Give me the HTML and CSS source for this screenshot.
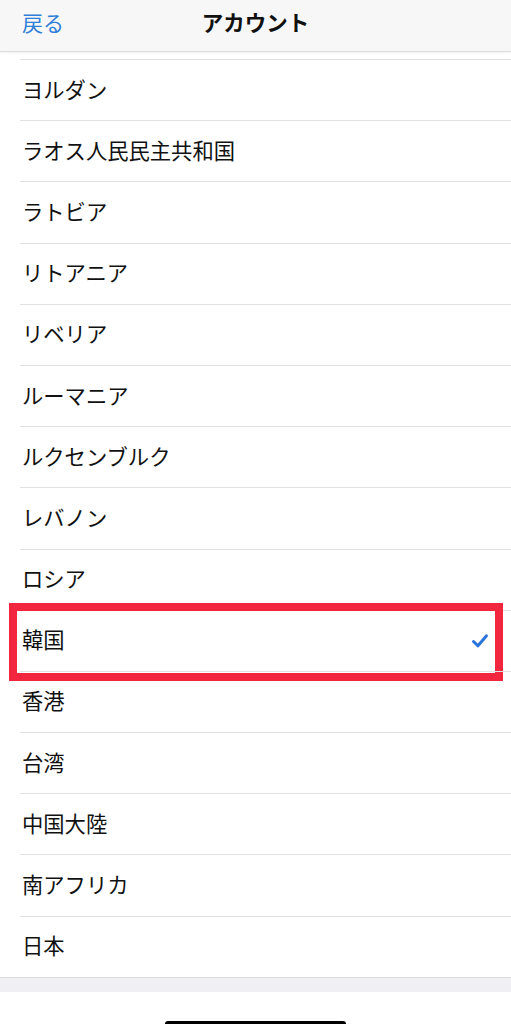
FILE: index.html
```html
<!DOCTYPE html>
<html lang="ja">
<head>
    <meta charset="UTF-8">
    <meta name="viewport" content="width=device-width, initial-scale=1.0">
    <title>アカウント</title>
    <link rel="stylesheet" href="styles.css">
</head>
<body>
    <div class="nav">
        <span class="back">戻る</span>
        <span class="title">アカウント</span>
        <span></span>
    </div>

    <div class="list">
        <div class="row">ヨルダン</div>
        <div class="row">ラオス人民民主共和国</div>
        <div class="row">ラトビア</div>
        <div class="row">リトアニア</div>
        <div class="row">リベリア</div>
        <div class="row">ルーマニア</div>
        <div class="row">ルクセンブルク</div>
        <div class="row">レバノン</div>
        <div class="row">ロシア</div>
        <div class="row selected">
            <span>韓国</span>
            <svg class="check" width="18" height="16" viewBox="0 0 18 16">
                <path d="M2.5 8.5 L7 12.8 L15.5 2.8" fill="none" stroke="#2b74d9" stroke-width="3" stroke-linecap="round" stroke-linejoin="round"/>
            </svg>
            <div class="highlight"></div>
        </div>
        <div class="row">香港</div>
        <div class="row">台湾</div>
        <div class="row">中国大陸</div>
        <div class="row">南アフリカ</div>
        <div class="row">日本</div>
    </div>

    <div class="footer"></div>
    <div class="home">
        <div class="home-bar"></div>
    </div>
</body>
</html>
```

FILE: styles.css
```css
body {
    margin: 0;
    background: #fff;
    font-family: "Noto Sans CJK JP", "Noto Sans", sans-serif;
    color: #111;
    overflow: hidden;
}

.nav {
    height: 52px;
    display: grid;
    grid-template-columns: 1fr auto 1fr;
    align-items: start;
    background: #f7f7f7;
    border-bottom: 1px solid #dcdcdc;
    box-sizing: border-box;
    box-shadow: 0 1px 2px rgba(0, 0, 0, 0.06);
}

.back {
    padding-left: 22px;
    line-height: 44px;
    font-size: 21px;
    color: #2f7ed8;
}

.title {
    line-height: 44px;
    font-size: 21.5px;
    font-weight: 700;
    color: #111;
}

.list {
    padding-top: 7px;
}

.row {
    position: relative;
    height: 61.2px;
    box-sizing: border-box;
    margin-left: 20px;
    padding-left: 2px;
    padding-right: 22px;
    padding-bottom: 4px;
    border-top: 1px solid #e1e1e1;
    display: flex;
    align-items: center;
    justify-content: space-between;
    font-size: 21.3px;
}

.check {
    display: block;
    margin-top: 4px;
}

.highlight {
    position: absolute;
    top: -8px;
    left: -11px;
    right: 8px;
    bottom: -10px;
    border: 8px solid #f2263f;
}

.footer {
    height: 14px;
    background: #efeff4;
    border-top: 1px solid #dcdcdc;
}

.home {
    height: 33px;
    display: flex;
    justify-content: center;
    align-items: flex-end;
}

.home-bar {
    width: 181px;
    height: 6px;
    margin-bottom: -2px;
    border-radius: 3px;
    background: #000;
}
```
